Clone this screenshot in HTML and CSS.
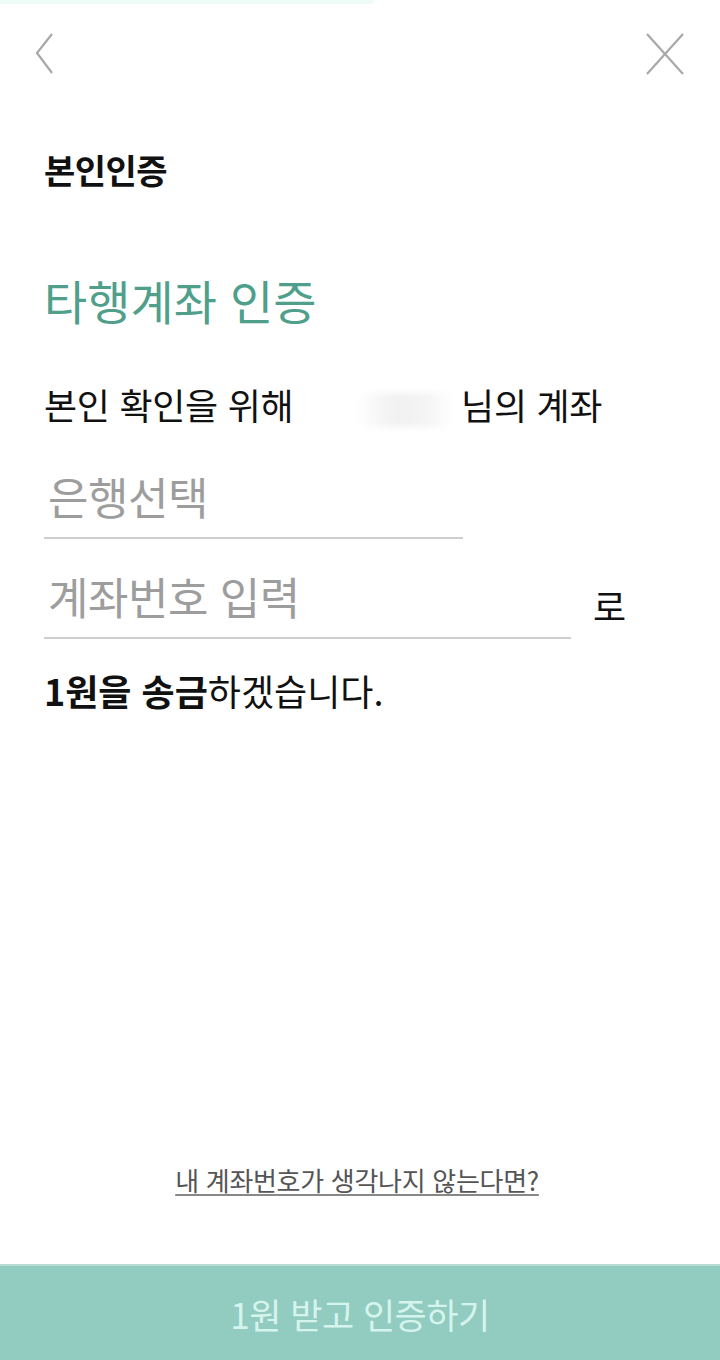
FILE: index.html
```html
<!DOCTYPE html>
<html lang="ko">
<head>
<meta charset="utf-8">
<link rel="stylesheet" href="styles.css">
</head>
<body>
<div class="page">
  <div class="topbar"></div>
  <div class="header">
    <svg class="icon-back" width="18" height="42" viewBox="0 0 18 42"><polyline points="16,1 1,20 16,40" fill="none" stroke="#a8a8a8" stroke-width="2.2"/></svg>
    <svg class="icon-close" width="38" height="42" viewBox="0 0 38 42"><line x1="1" y1="1" x2="37" y2="41" stroke="#a8a8a8" stroke-width="2.2"/><line x1="37" y1="1" x2="1" y2="41" stroke="#a8a8a8" stroke-width="2.2"/></svg>
  </div>
  <div class="content">
    <h1 class="page-title">본인인증</h1>
    <h2 class="section-title">타행계좌 인증</h2>
    <p class="sentence">본인 확인을 위해 <span class="masked">김○○</span>님의 계좌</p>
    <div class="field field-bank"><span class="placeholder">은행선택</span></div>
    <div class="account-row">
      <div class="field field-account"><span class="placeholder">계좌번호 입력</span></div>
      <span class="ro">로</span>
    </div>
    <p class="sentence send"><strong>1원을 송금</strong>하겠습니다.</p>
  </div>
  <div class="spacer"></div>
  <a class="help-link">내 계좌번호가 생각나지 않는다면?</a>
  <div class="cta">1원 받고 인증하기</div>
</div>
</body>
</html>
```
FILE: styles.css
```css
* { box-sizing: border-box; }
html, body { margin: 0; padding: 0; background: #fff; }
body { font-family: "Noto Sans CJK KR", "Noto Sans", sans-serif; color: #111; }
.page { width: 720px; height: 1360px; display: flex; flex-direction: column; }
.topbar { width: 373px; height: 4px; background: #eefcf7; }
.header { display: flex; justify-content: space-between; align-items: flex-start; padding: 29px 36px 0 36px; height: 110px; }
.content { padding-left: 44px; }
.page-title { margin: 36px 0 0; font-size: 34px; line-height: 40px; font-weight: 700; letter-spacing: -0.5px; }
.section-title { margin: 82px 0 0; font-size: 47px; line-height: 56px; font-weight: 400; color: #4f9f8b; letter-spacing: 0; }
.sentence { margin: 54px 0 0; font-size: 36px; line-height: 44px; letter-spacing: -0.3px; }
.masked { display: inline-block; width: 100px; color: transparent; background: linear-gradient(90deg, #fff 0%, #f1f1f1 40%, #f4f4f4 70%, #fff 100%); height: 34px; vertical-align: middle; border-radius: 12px; margin: 0 6px 0 52px; filter: blur(3px); }
.field { border-bottom: 2px solid #cfcfcf; height: 86px; padding: 15px 0 0 4px; }
.field-bank { width: 419px; margin-top: 26px; }
.field-account { width: 527px; margin-top: 14px; }
.placeholder { display: block; font-size: 44px; color: #9d9d9d; letter-spacing: -0.5px; line-height: 56px; }
.account-row { display: flex; align-items: flex-end; }
.ro { font-size: 36px; margin-left: 22px; line-height: 44px; margin-bottom: 12px; }
.send { margin-top: 29px; font-size: 36px; letter-spacing: 0; }
.send strong { font-weight: 700; }
.spacer { flex: 1; }
.help-link { align-self: center; font-size: 26px; color: #555; text-decoration: underline; text-decoration-color: #888; text-underline-offset: 3px; letter-spacing: -0.3px; margin-bottom: 66px; margin-right: 6px; }
.cta { height: 96px; background: #92cbbf; border-top: 2px solid #b9ddd5; color: #d6f4ee; font-size: 35px; display: flex; align-items: center; justify-content: center; letter-spacing: -0.5px; }
```
